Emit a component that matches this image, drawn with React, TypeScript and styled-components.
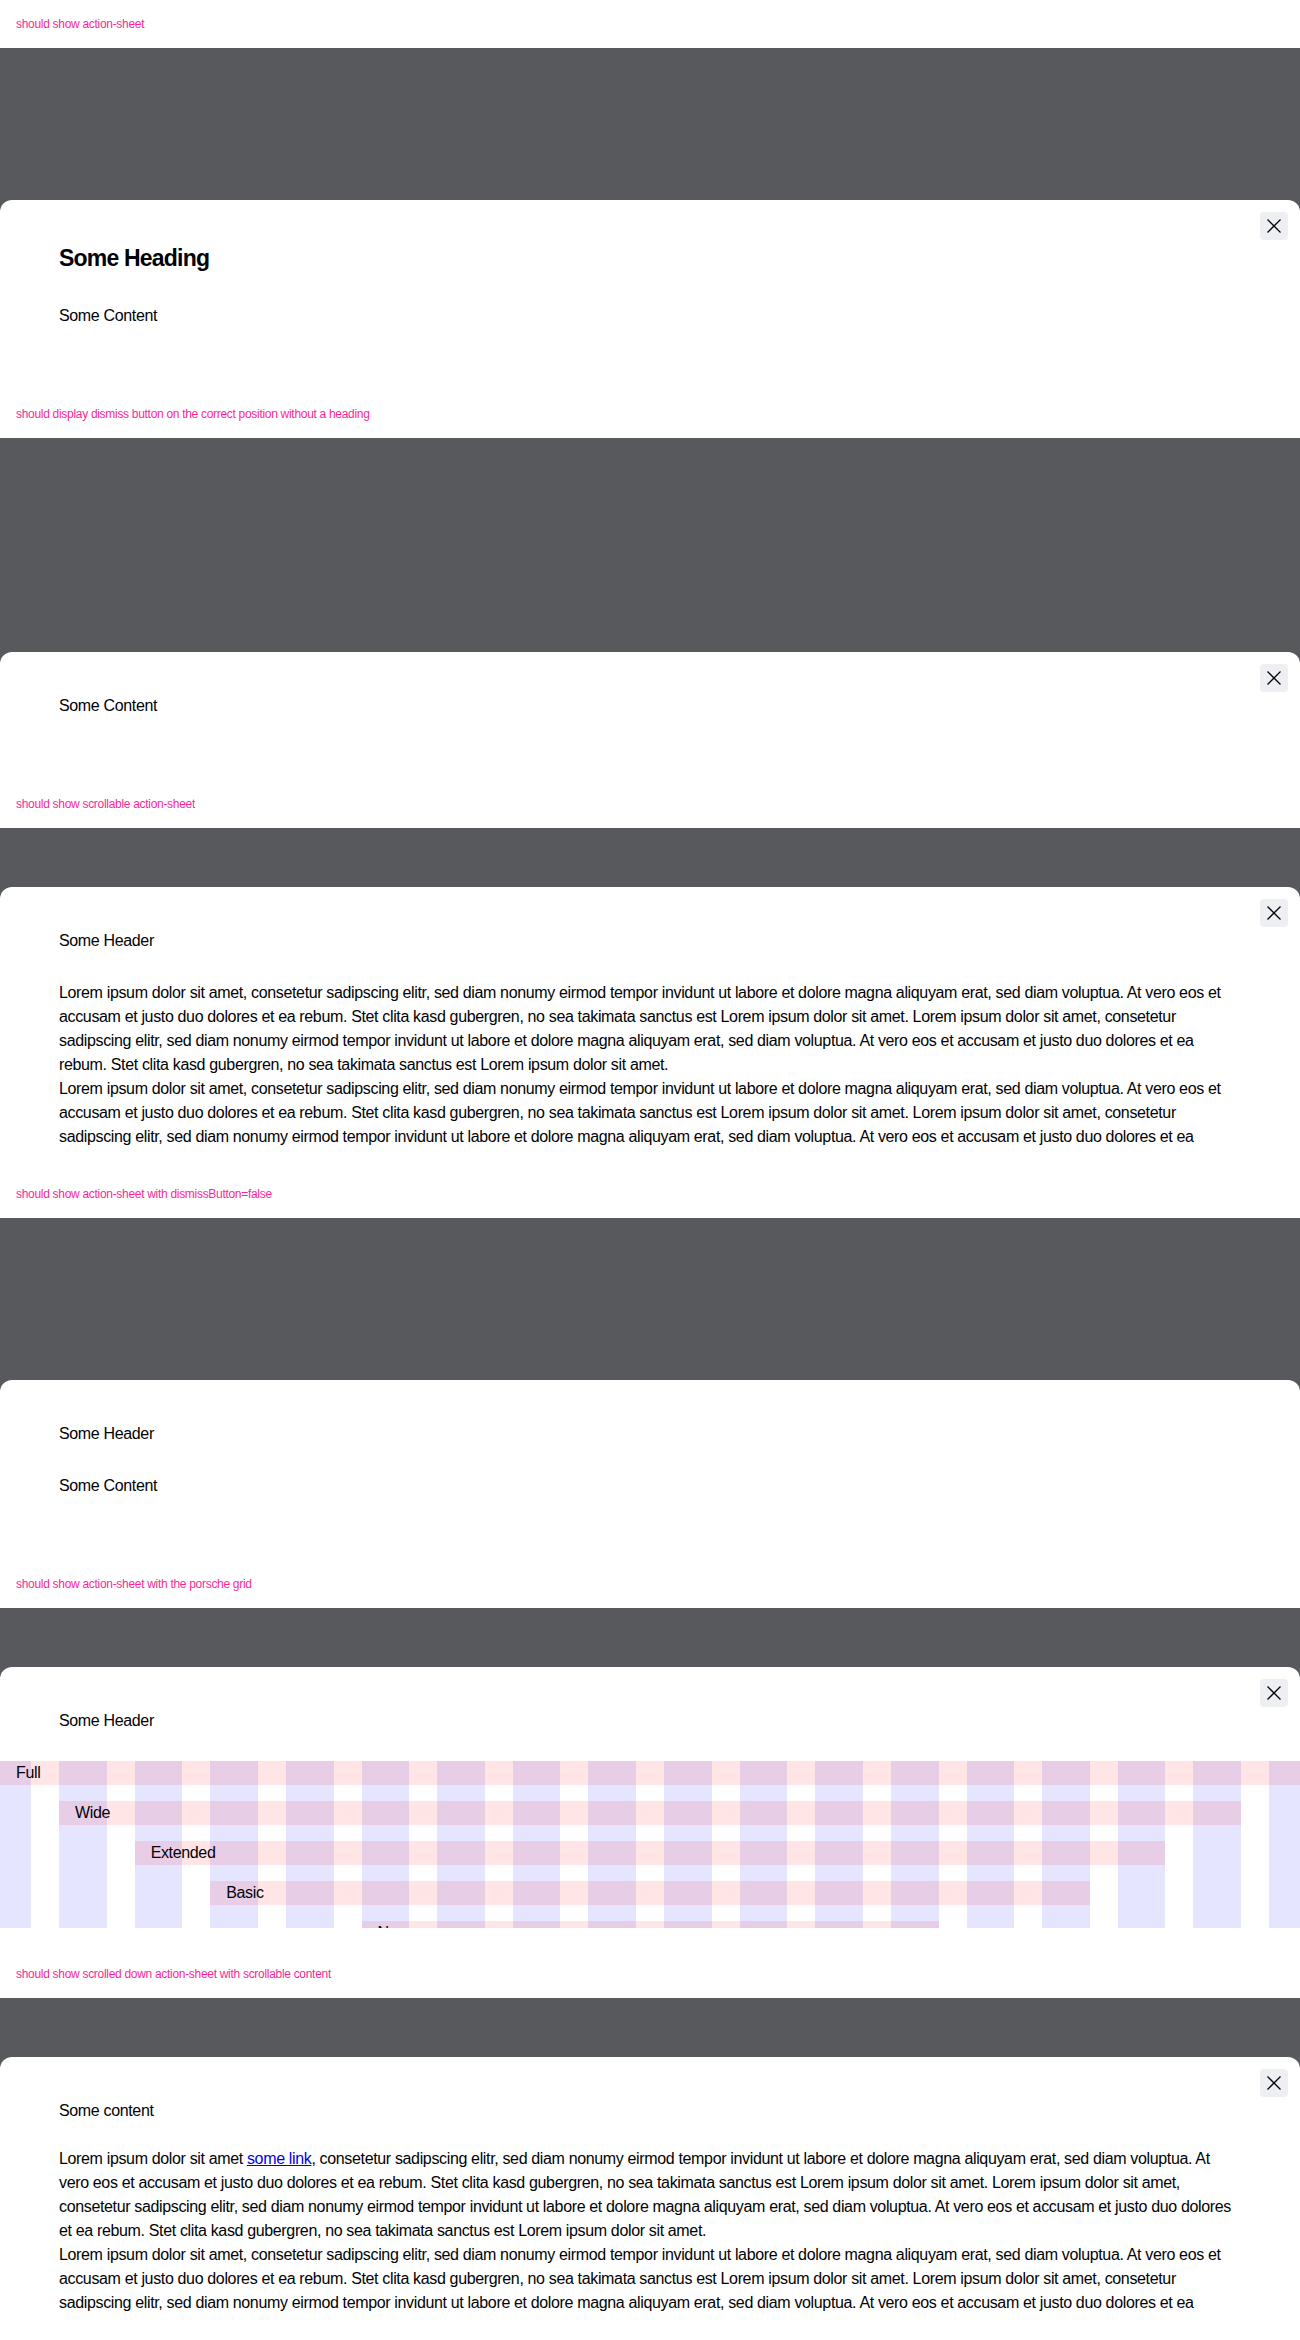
import React from 'react';
import styled, { createGlobalStyle } from 'styled-components';

const GlobalStyle = createGlobalStyle`
  *, *::before, *::after {
    box-sizing: border-box;
  }

  body {
    margin: 0;
    background: #fff;
    color: #010205;
    font-family: 'Liberation Sans', Arial, sans-serif;
  }
`;

const loremLines = [
  'Lorem ipsum dolor sit amet, consetetur sadipscing elitr, sed diam nonumy eirmod tempor invidunt ut labore et dolore magna aliquyam erat, sed diam voluptua. At vero eos et',
  'accusam et justo duo dolores et ea rebum. Stet clita kasd gubergren, no sea takimata sanctus est Lorem ipsum dolor sit amet. Lorem ipsum dolor sit amet, consetetur',
  'sadipscing elitr, sed diam nonumy eirmod tempor invidunt ut labore et dolore magna aliquyam erat, sed diam voluptua. At vero eos et accusam et justo duo dolores et ea',
  'rebum. Stet clita kasd gubergren, no sea takimata sanctus est Lorem ipsum dolor sit amet.',
];

const gridRows = [
  { label: 'Full', from: 1, to: 19 },
  { label: 'Wide', from: 2, to: 18 },
  { label: 'Extended', from: 3, to: 17 },
  { label: 'Basic', from: 4, to: 16 },
  { label: 'Narrow', from: 6, to: 14 },
];

function Lines({ lines }: { lines: React.ReactNode[] }) {
  return (
    <Lorem>
      {lines.map((line, i) => (
        <React.Fragment key={i}>
          {line}
          {i < lines.length - 1 && <br />}
        </React.Fragment>
      ))}
    </Lorem>
  );
}

function CloseIcon() {
  return (
    <svg width="24" height="24" viewBox="0 0 24 24" aria-hidden="true">
      <path d="M5.5 5.5l13 13M18.5 5.5l-13 13" stroke="#010205" strokeWidth="1.25" fill="none" />
    </svg>
  );
}

function DismissButton() {
  return (
    <Dismiss type="button" aria-label="Dismiss action sheet">
      <CloseIcon />
    </Dismiss>
  );
}

function App() {
  return (
    <Page>
      <GlobalStyle />

      <Block>
        <Title>should show action-sheet</Title>
        <Stage>
          <Sheet>
            <DismissButton />
            <Scroller $gap={30}>
              <Heading>Some Heading</Heading>
              <Text>Some Content</Text>
            </Scroller>
          </Sheet>
        </Stage>
      </Block>

      <Block>
        <Title>should display dismiss button on the correct position without a heading</Title>
        <Stage>
          <Sheet>
            <DismissButton />
            <Scroller>
              <Text>Some Content</Text>
            </Scroller>
          </Sheet>
        </Stage>
      </Block>

      <Block>
        <Title>should show scrollable action-sheet</Title>
        <Stage>
          <Sheet>
            <DismissButton />
            <Scroller>
              <Text>Some Header</Text>
              <Copy>
                <Lines lines={loremLines} />
                <Lines lines={loremLines} />
              </Copy>
            </Scroller>
          </Sheet>
        </Stage>
      </Block>

      <Block>
        <Title>should show action-sheet with dismissButton=false</Title>
        <Stage>
          <Sheet>
            <Scroller>
              <Text>Some Header</Text>
              <Text>Some Content</Text>
            </Scroller>
          </Sheet>
        </Stage>
      </Block>

      <Block>
        <Title>should show action-sheet with the porsche grid</Title>
        <Stage>
          <Sheet>
            <DismissButton />
            <Scroller>
              <Text>Some Header</Text>
              <Grid>
                {Array.from({ length: 18 }, (_, i) => (
                  <GridColumn key={i} $col={i + 1} />
                ))}
                {gridRows.map((row, i) => (
                  <GridRow key={row.label} $from={row.from} $to={row.to} $row={i + 1}>
                    {row.label}
                  </GridRow>
                ))}
              </Grid>
            </Scroller>
          </Sheet>
        </Stage>
      </Block>

      <Block>
        <Title>should show scrolled down action-sheet with scrollable content</Title>
        <Stage>
          <Sheet>
            <DismissButton />
            <Scroller $gap={24}>
              <Text>Some content</Text>
              <Copy>
                <Lines
                  lines={[
                    <>
                      Lorem ipsum dolor sit amet <Link href="#">some link</Link>, consetetur sadipscing elitr, sed diam nonumy eirmod tempor invidunt ut labore et dolore magna aliquyam erat, sed diam voluptua. At
                    </>,
                    'vero eos et accusam et justo duo dolores et ea rebum. Stet clita kasd gubergren, no sea takimata sanctus est Lorem ipsum dolor sit amet. Lorem ipsum dolor sit amet,',
                    'consetetur sadipscing elitr, sed diam nonumy eirmod tempor invidunt ut labore et dolore magna aliquyam erat, sed diam voluptua. At vero eos et accusam et justo duo dolores',
                    'et ea rebum. Stet clita kasd gubergren, no sea takimata sanctus est Lorem ipsum dolor sit amet.',
                  ]}
                />
                <Lines lines={loremLines} />
              </Copy>
            </Scroller>
          </Sheet>
        </Stage>
      </Block>
    </Page>
  );
}

export default App;

const Page = styled.main`
  width: 1300px;
`;

const Block = styled.section`
  height: 390px;
  display: flex;
  flex-direction: column;
`;

const Title = styled.p`
  margin: 0;
  height: 48px;
  padding: 0 16px;
  display: flex;
  align-items: center;
  font-size: 12px;
  letter-spacing: -0.3px;
  color: #ff1f96;
`;

const Stage = styled.div`
  flex: 1;
  min-height: 0;
  display: flex;
  flex-direction: column;
  justify-content: flex-end;
  background: #58595c;
`;

const Sheet = styled.div`
  position: relative;
  display: flex;
  flex-direction: column;
  max-height: 283px;
  padding-bottom: 22px;
  background: #fff;
  border-radius: 12px 12px 0 0;
`;

const Scroller = styled.div<{ $gap?: number }>`
  flex: 1 1 auto;
  min-height: 0;
  overflow: hidden;
  display: flex;
  flex-direction: column;
  gap: ${(p) => p.$gap ?? 28}px;
  padding: 42px 59px 40px;

  & > * {
    flex-shrink: 0;
  }
`;

const Heading = styled.h2`
  margin: 0;
  font-size: 23px;
  line-height: 32px;
  font-weight: 700;
  letter-spacing: -0.8px;
`;

const Text = styled.p`
  margin: 0;
  font-size: 16px;
  line-height: 24px;
  letter-spacing: -0.35px;
`;

const Lorem = styled(Text)`
  white-space: nowrap;
`;

const Copy = styled.div``;

const Link = styled.a`
  color: #0000ee;
  text-decoration: underline;
`;

const Dismiss = styled.button`
  position: absolute;
  top: 12px;
  right: 12px;
  z-index: 1;
  width: 28px;
  height: 28px;
  padding: 0;
  border: 0;
  border-radius: 4px;
  background: #eeeff2;
  display: flex;
  align-items: center;
  justify-content: center;
  cursor: pointer;
`;

const Grid = styled.div`
  display: grid;
  grid-template-columns: 31px repeat(16, minmax(0, 1fr)) 31px;
  grid-auto-rows: 24px;
  column-gap: 28px;
  row-gap: 16px;
  margin: 0 -59px;
`;

const GridColumn = styled.div<{ $col: number }>`
  grid-column: ${(p) => p.$col};
  grid-row: 1 / 6;
  background: rgba(0, 0, 255, 0.1);
`;

const GridRow = styled.div<{ $from: number; $to: number; $row: number }>`
  grid-column: ${(p) => p.$from} / ${(p) => p.$to};
  grid-row: ${(p) => p.$row};
  padding-left: 16px;
  background: rgba(255, 0, 0, 0.1);
  font-size: 16px;
  line-height: 24px;
  letter-spacing: -0.35px;
`;
